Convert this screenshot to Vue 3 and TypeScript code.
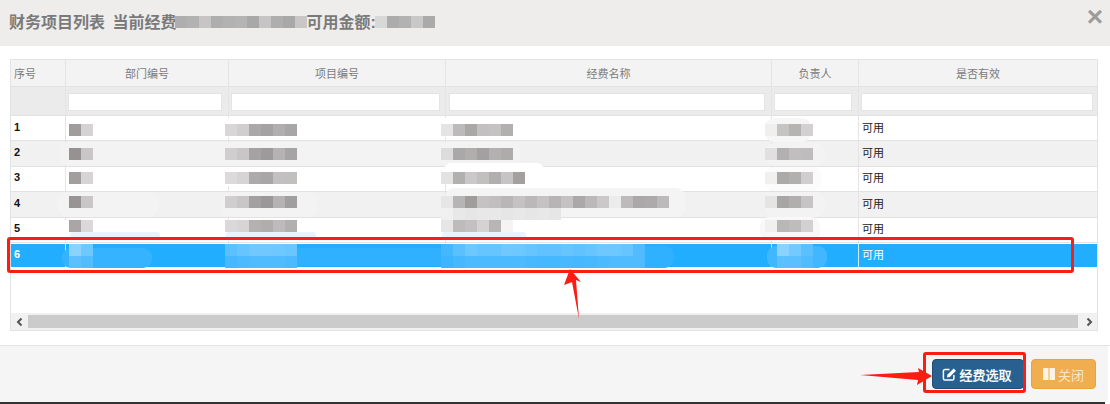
<script setup lang="ts">
interface Patch {
  x: number
  y: number
  colors: string[]
}

const columns = ['序号', '部门编号', '项目编号', '经费名称', '负责人', '是否有效']
const rows = [1, 2, 3, 4, 5, 6]

const patch = (x: number, y: number, list: string): Patch => ({
  x,
  y,
  colors: list.split(' ').map((c) => '#' + c)
})

// the redaction mosaic lying over the table and the title
const patches: Patch[] = [
  patch(175, 16, 'aeaeae b2b2b2 c6c4c4 aeaeae b2b2b2 b4b4b4 a8a8a8 c6c4c4 aeaeae a8a8a8 c8c6c6'),
  patch(375, 16, 'd8d8d8 acacac b2b2b2 c8c8c8 aaaaaa'),

  patch(69, 124, 'a09c9c d4d2d2'),
  patch(69, 148, '969292 c8c6c6'),
  patch(69, 172, 'a29e9e d6d4d4'),
  patch(69, 196, '989494 c8c6c6'),
  patch(69, 220, 'aaa6a6 dad8d8'),
  patch(69, 244, '8ad2ff 6cc8ff'),
  patch(69, 256, '5cc0ff 52bcff'),

  patch(225, 124, 'd8d6d6 d0cece aaa8a8 a4a2a2 b0aeae a8a6a6'),
  patch(225, 148, 'd0cece c8c6c6 a4a2a2 9c9a9a b4b2b2 a6a4a4'),
  patch(225, 172, 'dcdada d6d4d4 acaaaa a8a6a6 c2c0c0 c2c0be'),
  patch(225, 196, 'd0cece c8c6c6 a2a0a0 9a9898 b4b2b2 a09e9e'),
  patch(225, 220, 'dad8d8 d6d4d4 b4b2b0 b0aeac bcbaba b2b0ae'),
  patch(225, 244, '5cc0ff 66c4ff 70c8ff 70c8ff 6ec8ff 6ac6ff'),
  patch(225, 256, '46b8ff 4cbaff 50bcff 50bcff 50bcff 4cbaff'),

  patch(441, 124, 'e4e4e4 bcbaba aaa8a6 c2c0c0 c4c2c2 b2b0ae'),
  patch(441, 148, 'dcdcdc aaa8a8 b0aeac a2a0a0 b2b0b0 aeacaa'),
  patch(441, 172, 'e2e2e2 b2b0ae cac8c8 c2c0be b0aeae c6c4c4 a4a0a0'),
  patch(441, 196, 'e6e6e6 b6b4b4 a09c9c c4c2c2 c0bebe b8b6b6 c4c2c2 bab8b8 c4c2c2 b6b4b4 c4c2c2 aaa8a8 bab8b8 cac8c8 ececec bcbaba aaa8a8 acaaaa bcbaba'),
  patch(441, 208, 'f0f0f0 e8e8e8 e6e6e6 e8e8e8 e8e8e8 e6e6e6 e8e8e8 e6e6e6 e8e8e8 e6e6e6'),
  patch(441, 220, 'e6e6e6 bebcba c2c0c0 d4d2d2 b8b6b4 f4f4f4'),
  patch(441, 244, '44b8ff 5cc0ff 6cc8ff 66c4ff 66c4ff 70c8ff 6cc8ff 66c4ff 60c2ff 62c2ff 66c4ff 60c2ff 66c4ff 6ec8ff 6cc8ff 66c4ff 50bcff'),
  patch(441, 256, '3cb4ff 46b8ff 4cbaff 4cbaff 4cbaff 4cbaff 4cbaff 48b8ff 46b8ff 46b8ff 48b8ff 46b8ff 48b8ff 4cbaff 50bcff 50bcff 50bcff'),

  patch(765, 124, 'efefef c6c4c2 b6b4b2 d2d0d0'),
  patch(765, 148, 'e0e0e0 b2b0b0 c0bebe bebcbc'),
  patch(765, 172, 'f0f0f0 acaaa8 b2b0ae d0cece'),
  patch(765, 196, 'e4e4e4 a8a6a4 b0aeae c6c4c4'),
  patch(765, 220, 'f0f0f0 bab8b6 bebcbc d2d0d0'),
  patch(777, 244, '8ad2ff 72caff 5cc0ff'),
  patch(777, 256, '5cc0ff 5cc0ff 50bcff')
]

// smudges that hide the original text around the mosaic: [x, y, w, h, colour]
const smudges: [number, number, number, number, string][] = [
  [68, 118, 400, 19, '#fff'],
  [60, 142, 460, 24, '#f3f3f3'],
  [68, 167, 72, 19, '#fff'],
  [218, 167, 118, 19, '#fff'],
  [444, 163, 100, 14, '#fff'],
  [58, 192, 100, 25, '#f3f3f3'],
  [222, 192, 95, 25, '#f3f3f3'],
  [445, 188, 240, 29, '#f4f4f4'],
  [62, 218, 95, 24, '#fff'],
  [224, 218, 96, 24, '#fff'],
  [442, 218, 82, 21, '#fff'],
  [70, 232, 90, 6, '#e8f4fb'],
  [226, 232, 90, 6, '#e8f4fb'],
  [442, 232, 84, 6, '#e8f4fb'],
  [62, 248, 90, 20, '#36b3ff'],
  [226, 248, 230, 18, '#30b1ff'],
  [442, 246, 232, 22, '#30b1ff'],
  [767, 246, 60, 22, '#40b7ff'],
  [765, 118, 46, 24, '#f6f6f6'],
  [765, 143, 60, 23, '#f3f3f3'],
  [765, 167, 56, 24, '#fbfbfb'],
  [765, 192, 60, 25, '#f3f3f3'],
  [760, 217, 60, 24, '#f8f8f8']
]
</script>

<template>
  <div class="modal">
    <header class="modal-head">
      <h4 class="title">财务项目列表 当前经费<span class="gap-a"></span>可用金额:</h4>
      <span class="close">×</span>
    </header>

    <div class="modal-body">
      <div class="grid">
        <table class="grid-table">
          <colgroup>
            <col style="width: 55px" />
            <col style="width: 163px" />
            <col style="width: 217px" />
            <col style="width: 326px" />
            <col style="width: 87px" />
            <col style="width: 238px" />
          </colgroup>
          <thead>
            <tr class="head-row">
              <th v-for="c in columns" :key="c">{{ c }}</th>
            </tr>
            <tr class="filter-row">
              <td v-for="c in columns" :key="c">
                <input v-if="c !== '序号'" type="text" />
              </td>
            </tr>
          </thead>
          <tbody>
            <tr v-for="r in rows" :key="r" :class="{ odd: r % 2 === 0, selected: r === 6 }">
              <td class="num">{{ r }}</td>
              <td></td>
              <td></td>
              <td></td>
              <td></td>
              <td>可用</td>
            </tr>
          </tbody>
        </table>
        <div class="scrollbar">
          <span class="arrow">
            <svg width="10" height="10" viewBox="0 0 10 10"><path d="M6.500 1.500 3 5l3.500 3.500" fill="none" stroke="#555" stroke-width="2" /></svg>
          </span>
          <div class="thumb"></div>
          <span class="arrow">
            <svg width="10" height="10" viewBox="0 0 10 10"><path d="M3.500 1.500 7 5 3.500 8.500" fill="none" stroke="#555" stroke-width="2" /></svg>
          </span>
        </div>
      </div>
    </div>

    <footer class="modal-foot">
      <button class="btn btn-primary">
        <svg class="ico" width="15" height="14" viewBox="0 0 15 14">
          <path d="M7.500 2.500H3a1.600 1.600 0 0 0-1.600 1.600v7.300A1.600 1.600 0 0 0 3 13h7.300a1.600 1.600 0 0 0 1.600-1.600V8" fill="none" stroke="#fff" stroke-width="1.500" />
          <path d="M5.500 7.600 11.700 1.400l2.300 2.300-6.200 6.200-2.800.5z" fill="#fff" />
        </svg>
        经费选取
      </button>
      <button class="btn btn-warning">
        <svg class="ico" width="12" height="12" viewBox="0 0 12 12">
          <rect x="0" y="0" width="5.500" height="12" rx="0.500" fill="#fff" fill-opacity="0.850" />
          <rect x="6.500" y="0" width="5.500" height="12" rx="0.500" fill="#fff" fill-opacity="0.850" />
        </svg>
        关闭
      </button>
    </footer>
    <div class="edge"></div>

    <!-- redaction painted over the screenshot -->
    <div
      v-for="(s, i) in smudges"
      :key="'s' + i"
      class="smudge"
      :style="{ left: s[0] + 'px', top: s[1] + 'px', width: s[2] + 'px', height: s[3] + 'px', background: s[4] }"
    ></div>
    <div
      v-for="(p, i) in patches"
      :key="'p' + i"
      class="mosaic"
      :style="{ left: p.x + 'px', top: p.y + 'px' }"
    >
      <i v-for="(c, j) in p.colors" :key="j" :style="{ background: c }"></i>
    </div>

    <!-- red annotations -->
    <div class="mark mark-row"></div>
    <div class="mark mark-btn"></div>
    <svg class="arrows" width="1110" height="404" viewBox="0 0 1110 404">
      <polygon points="570,269 581,282 576,280 579,319 572,282 564,285" fill="#fb1c12" />
      <polygon points="860,375 919,372 918,368 932,376 917,385 918,380" fill="#fb1c12" />
    </svg>
  </div>
</template>

<style scoped>
.modal {
  position: relative;
  width: 1110px;
  height: 404px;
  display: flex;
  flex-direction: column;
  background: #fff;
  overflow: hidden;
  font-family: "Liberation Sans", "Noto Sans CJK SC", sans-serif;
}

.modal-head {
  height: 46px;
  flex: none;
  box-sizing: border-box;
  display: flex;
  justify-content: space-between;
  padding: 14px 7px 0 9px;
  background: #eeedec;
}

.title {
  margin: 0;
  font-size: 16px;
  line-height: 18px;
  font-weight: bold;
  color: #7a7a7a;
  white-space: nowrap;
  word-spacing: 3px;
}

.gap-a {
  display: inline-block;
  width: 130px;
}

.close {
  margin-top: -11px;
  font-size: 28px;
  line-height: 28px;
  font-weight: bold;
  color: #9c9c9c;
}

.modal-body {
  flex: 1;
  padding: 13px 12px 0 10px;
  border-bottom: 1px solid #e5e5e5;
}

.grid {
  box-sizing: border-box;
  width: 1088px;
  height: 272px;
  display: flex;
  flex-direction: column;
  justify-content: space-between;
  border: 1px solid #e3e3e3;
}

.grid-table {
  width: 1086px;
  table-layout: fixed;
  border-collapse: separate;
  border-spacing: 0;
  font-size: 11px;
  color: #222;
}

.grid-table th,
.grid-table td {
  padding: 0;
  box-sizing: border-box;
  border-right: 1px solid #e4e4e4;
  border-bottom: 1px solid #e2e2e2;
}

.grid-table th:last-child,
.grid-table td:last-child {
  border-right: none;
}

.head-row th {
  height: 27px;
  background: #f3f3f3;
  font-weight: normal;
  color: #7b7b7b;
  text-align: center;
}

.head-row th:first-child {
  text-align: left;
  padding-left: 3px;
}

.filter-row td {
  height: 29px;
  background: #ebebeb;
  padding-top: 1px;
}

.filter-row input {
  display: block;
  box-sizing: border-box;
  height: 18px;
  padding: 0;
  border: 1px solid #e4e4e4;
  background: #fff;
  outline: none;
}

.filter-row td:nth-child(2) { padding-left: 2px; }
.filter-row td:nth-child(2) input { width: 154px; }
.filter-row td:nth-child(3) { padding-left: 2px; }
.filter-row td:nth-child(3) input { width: 209px; }
.filter-row td:nth-child(4) { padding-left: 3px; }
.filter-row td:nth-child(4) input { width: 316px; }
.filter-row td:nth-child(5) { padding-left: 2px; }
.filter-row td:nth-child(5) input { width: 78px; }
.filter-row td:nth-child(6) { padding-left: 2px; }
.filter-row td:nth-child(6) input { width: 232px; }

.grid-table tbody td {
  height: 25.400px;
  padding: 0 3px 1px;
  background: #fff;
  line-height: 20px;
}

.grid-table tbody .num {
  padding-bottom: 3px;
  font-weight: bold;
  color: #111;
}

.grid-table tbody tr.odd td {
  background: #f1f1f1;
}

.grid-table tbody tr.selected td {
  background: #22aeff;
  color: #fff;
  border-bottom: 1px solid #fff;
  border-right-color: #cfeaff;
  box-shadow: inset 0 1px 0 #fff;
}

.grid-table tbody tr.selected td:last-child {
  border-right: none;
}

.scrollbar {
  height: 17px;
  display: flex;
  align-items: center;
  background: #f1f1f1;
}

.arrow {
  width: 17px;
  height: 17px;
  flex: none;
  display: flex;
  align-items: center;
  justify-content: center;
}

.thumb {
  flex: 1;
  height: 13px;
  background: #cbcbcb;
  margin-right: 2px;
}

.modal-foot {
  height: 56px;
  flex: none;
  margin-right: 2px;
  box-sizing: border-box;
  display: flex;
  justify-content: flex-end;
  gap: 7px;
  padding: 13px 12px 0 0;
  background: #f5f5f5;
  border-bottom-right-radius: 4px;
}

.edge {
  height: 2px;
  flex: none;
  width: 1105px;
  background: #333;
}

.btn {
  height: 30px;
  box-sizing: border-box;
  display: flex;
  align-items: center;
  justify-content: center;
  border-radius: 4px;
  font-family: inherit;
  font-size: 13px;
  padding: 0;
  color: #fff;
}

.btn-primary {
  width: 92px;
  gap: 2px;
  padding-right: 2px;
  background: #286090;
  border: 1px solid #204d74;
  font-weight: 500;
  -webkit-text-stroke: 0.200px #fff;
}

.btn-warning {
  width: 65px;
  gap: 3px;
  background: #f0ae50;
  border: 1px solid #eea236;
  color: #fbe6c6;
}

.ico {
  flex: none;
}

.smudge {
  position: absolute;
  border-radius: 9px;
}

.mosaic {
  position: absolute;
  display: flex;
}

.mosaic i {
  display: block;
  width: 12px;
  height: 12px;
}

.mark {
  position: absolute;
  box-sizing: border-box;
  border: 3px solid #fb1c12;
  border-radius: 3px;
}

.mark-row {
  left: 7px;
  top: 237px;
  width: 1067px;
  height: 36px;
}

.mark-btn {
  left: 923px;
  top: 352px;
  width: 103px;
  height: 41px;
}

.arrows {
  position: absolute;
  left: 0;
  top: 0;
  pointer-events: none;
}
</style>

<style>
body {
  background: #fff;
}
</style>
